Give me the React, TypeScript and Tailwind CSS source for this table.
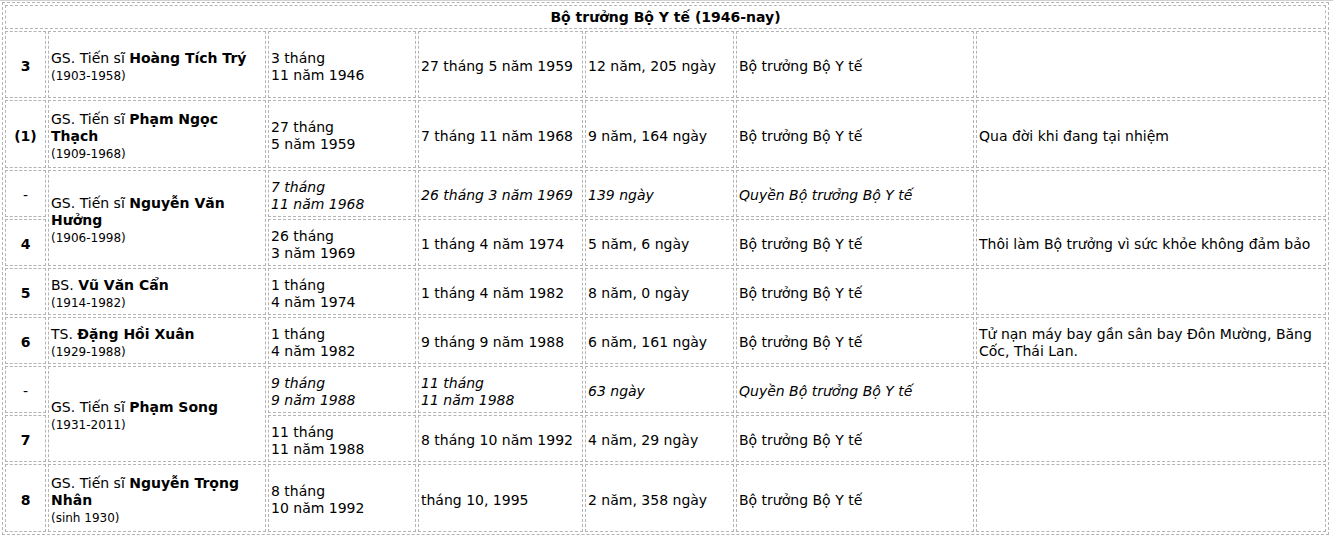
import React from "react";

const hd = "border border-dashed border-[#b4b4b4] px-[2px] py-0 align-middle";
const td = "border border-dashed border-[#b4b4b4] px-[2px] pt-[4px] pb-0 align-middle";
const num = td + " text-center font-bold";
const small = "text-[12px] leading-[16px]";

function Name({ pre, bold, years }: { pre: string; bold: React.ReactNode; years: string }) {
  return (
    <>
      {pre} <b>{bold}</b>
      <br />
      <span className={small}>{years}</span>
    </>
  );
}

export default function App() {
  return (
    <div className="w-[1333px] h-[536px] bg-white border-t border-[#d0d0d0] font-['DejaVu_Sans',Verdana,sans-serif] text-[14px] leading-[17px] text-black">
      <table className="ml-[2px] mt-[1px] w-[1327px] table-fixed border-separate border-spacing-[2px] border border-dashed border-[#b4b4b4]">
        <colgroup>
          <col className="w-[41px]" />
          <col className="w-[218px]" />
          <col className="w-[148px]" />
          <col className="w-[165px]" />
          <col className="w-[149px]" />
          <col className="w-[238px]" />
          <col className="w-[350px]" />
        </colgroup>
        <tbody>
          <tr>
            <td colSpan={7} className={hd + " h-[24px] text-center font-bold"}>
              Bộ trưởng Bộ Y tế (1946-nay)
            </td>
          </tr>
          <tr>
            <td className={num + " h-[67px]"}>3</td>
            <td className={td}>
              <Name pre="GS. Tiến sĩ" bold="Hoàng Tích Trý" years="(1903-1958)" />
            </td>
            <td className={td}>3 tháng<br />11 năm 1946</td>
            <td className={td}>27 tháng 5 năm 1959</td>
            <td className={td}>12 năm, 205 ngày</td>
            <td className={td}>Bộ trưởng Bộ Y tế</td>
            <td className={td}></td>
          </tr>
          <tr>
            <td className={num + " h-[68px]"}>(1)</td>
            <td className={td}>
              <Name pre="GS. Tiến sĩ" bold={<>Phạm Ngọc<br />Thạch</>} years="(1909-1968)" />
            </td>
            <td className={td}>27 tháng<br />5 năm 1959</td>
            <td className={td}>7 tháng 11 năm 1968</td>
            <td className={td}>9 năm, 164 ngày</td>
            <td className={td}>Bộ trưởng Bộ Y tế</td>
            <td className={td}>Qua đời khi đang tại nhiệm</td>
          </tr>
          <tr>
            <td className={td + " h-[47px] text-center"}>-</td>
            <td rowSpan={2} className={td}>
              <Name pre="GS. Tiến sĩ" bold={<>Nguyễn Văn<br />Hưởng</>} years="(1906-1998)" />
            </td>
            <td className={td + " italic"}>7 tháng<br />11 năm 1968</td>
            <td className={td + " italic"}>26 tháng 3 năm 1969</td>
            <td className={td + " italic"}>139 ngày</td>
            <td className={td + " italic"}>Quyền Bộ trưởng Bộ Y tế</td>
            <td className={td}></td>
          </tr>
          <tr>
            <td className={num + " h-[47px]"}>4</td>
            <td className={td}>26 tháng<br />3 năm 1969</td>
            <td className={td}>1 tháng 4 năm 1974</td>
            <td className={td}>5 năm, 6 ngày</td>
            <td className={td}>Bộ trưởng Bộ Y tế</td>
            <td className={td + " whitespace-nowrap"}>Thôi làm Bộ trưởng vì sức khỏe không đảm bảo</td>
          </tr>
          <tr>
            <td className={num + " h-[47px]"}>5</td>
            <td className={td}>
              <Name pre="BS." bold="Vũ Văn Cẩn" years="(1914-1982)" />
            </td>
            <td className={td}>1 tháng<br />4 năm 1974</td>
            <td className={td}>1 tháng 4 năm 1982</td>
            <td className={td}>8 năm, 0 ngày</td>
            <td className={td}>Bộ trưởng Bộ Y tế</td>
            <td className={td}></td>
          </tr>
          <tr>
            <td className={num + " h-[47px]"}>6</td>
            <td className={td}>
              <Name pre="TS." bold="Đặng Hồi Xuân" years="(1929-1988)" />
            </td>
            <td className={td}>1 tháng<br />4 năm 1982</td>
            <td className={td}>9 tháng 9 năm 1988</td>
            <td className={td}>6 năm, 161 ngày</td>
            <td className={td}>Bộ trưởng Bộ Y tế</td>
            <td className={td}>Tử nạn máy bay gần sân bay Đôn Mường, Băng<br />Cốc, Thái Lan.</td>
          </tr>
          <tr>
            <td className={td + " h-[47px] text-center"}>-</td>
            <td rowSpan={2} className={td}>
              <Name pre="GS. Tiến sĩ" bold="Phạm Song" years="(1931-2011)" />
            </td>
            <td className={td + " italic"}>9 tháng<br />9 năm 1988</td>
            <td className={td + " italic"}>11 tháng<br />11 năm 1988</td>
            <td className={td + " italic"}>63 ngày</td>
            <td className={td + " italic"}>Quyền Bộ trưởng Bộ Y tế</td>
            <td className={td}></td>
          </tr>
          <tr>
            <td className={num + " h-[47px]"}>7</td>
            <td className={td}>11 tháng<br />11 năm 1988</td>
            <td className={td}>8 tháng 10 năm 1992</td>
            <td className={td}>4 năm, 29 ngày</td>
            <td className={td}>Bộ trưởng Bộ Y tế</td>
            <td className={td}></td>
          </tr>
          <tr>
            <td className={num + " h-[68px]"}>8</td>
            <td className={td}>
              <Name pre="GS. Tiến sĩ" bold={<>Nguyễn Trọng<br />Nhân</>} years="(sinh 1930)" />
            </td>
            <td className={td}>8 tháng<br />10 năm 1992</td>
            <td className={td}>tháng 10, 1995</td>
            <td className={td}>2 năm, 358 ngày</td>
            <td className={td}>Bộ trưởng Bộ Y tế</td>
            <td className={td}></td>
          </tr>
        </tbody>
      </table>
    </div>
  );
}
